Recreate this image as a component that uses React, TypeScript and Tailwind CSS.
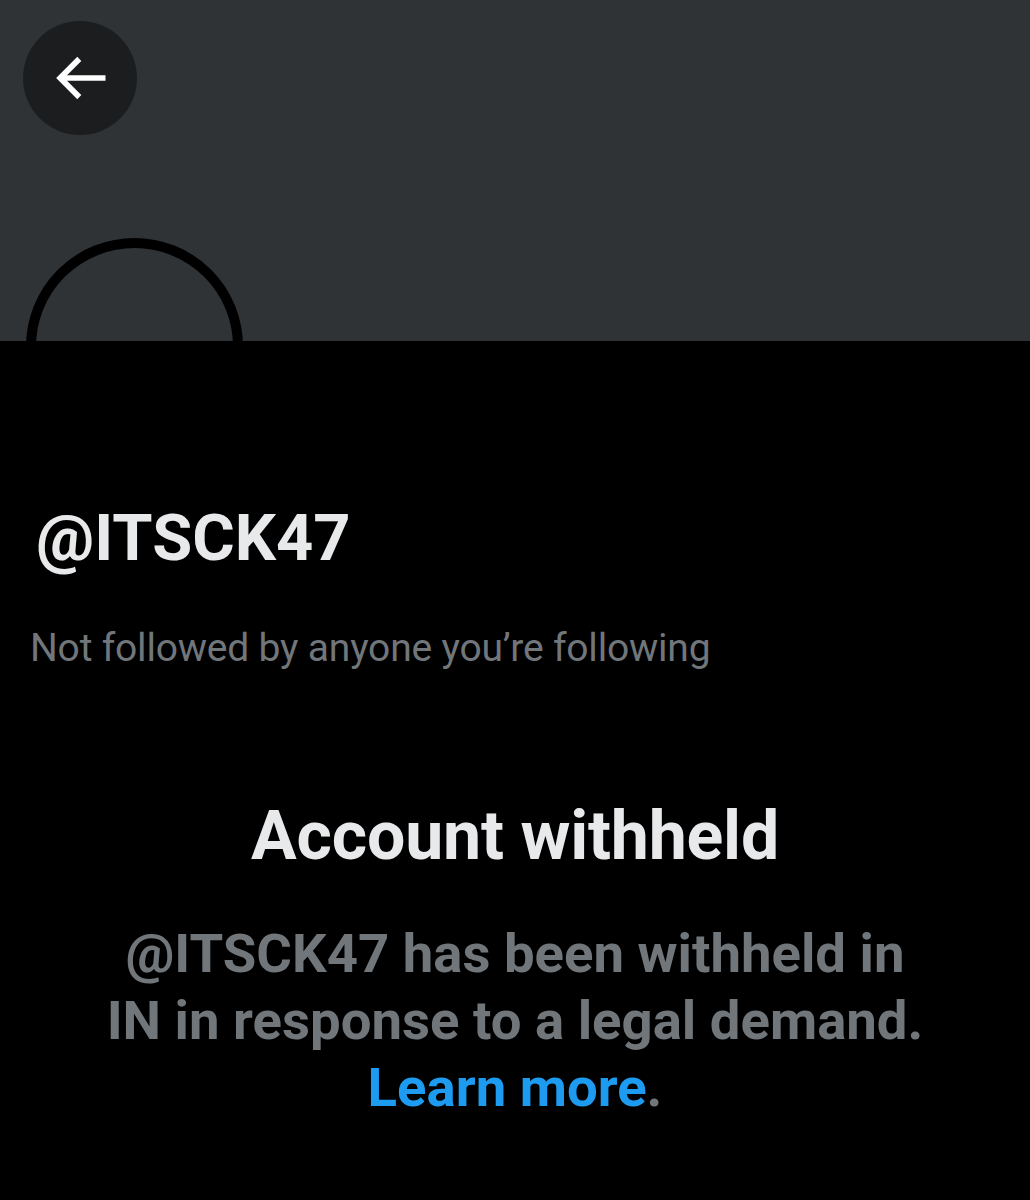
import React from "react";

export default function App() {
  return (
    <div
      className="relative w-[1030px] h-[1200px] overflow-hidden bg-black"
      style={{ fontFamily: "Roboto, 'Noto Sans', sans-serif" }}
    >
      <div className="relative h-[341px] bg-[#2f3336] pl-[23px] pt-[21px]">
        <button className="flex h-[114px] w-[114px] items-center justify-center rounded-full bg-[#1b1d1f]">
          <svg viewBox="0 0 24 24" className="h-[68px] w-[68px]" fill="#ffffff">
            <path d="M7.414 13l5.043 5.04-1.414 1.42L3.586 12l7.457-7.46 1.414 1.42L7.414 11H21v2H7.414z" />
          </svg>
        </button>
        <div className="absolute left-[26px] top-[238px] h-[217px] w-[217px] rounded-full border-[10px] border-black" />
      </div>
      <div className="px-[36px] pt-[159px]">
        <div className="text-[65px] font-bold leading-[76px] text-[#e7e9ea]">@ITSCK47</div>
        <div className="-ml-[6px] mt-[49px] text-[39px] leading-[46px] tracking-[-0.2px] text-[#71767b]">
          Not followed by anyone you’re following
        </div>
      </div>
      <div className="mt-[125px] flex flex-col items-center text-center">
        <div className="text-[68px] font-bold leading-[80px] tracking-[-0.2px] text-[#e7e9ea]">Account withheld</div>
        <div className="mt-[44px] text-[54.5px] font-bold leading-[67px] text-[#71767b]">
          @ITSCK47 has been withheld in
          <br />
          IN in response to a legal demand.
          <br />
          <span className="text-[#1d9bf0]">Learn more</span>.
        </div>
      </div>
    </div>
  );
}
